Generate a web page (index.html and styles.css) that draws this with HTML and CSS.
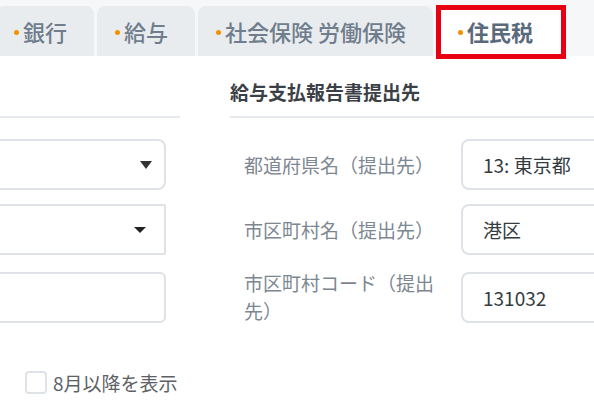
FILE: index.html
```html
<!DOCTYPE html>
<html lang="ja">
<head>
<meta charset="utf-8">
<title>住民税</title>
<link rel="stylesheet" href="styles.css">
</head>
<body>
<div class="page">
  <nav class="tabs">
    <div class="tab"><span class="dot"></span>銀行</div>
    <div class="tab"><span class="dot"></span>給与</div>
    <div class="tab"><span class="dot"></span>社会保険 労働保険</div>
    <div class="tab tab-active"><span class="dot"></span>住民税</div>
  </nav>
  <main class="content">
    <section class="col col-left">
      <div class="sec-head"></div>
      <div class="rows">
        <div class="row">
          <div class="field field-a">
            <svg class="arrow" width="12" height="8" viewBox="0 0 12 8"><polygon points="0,0 12,0 6,8" fill="#333"/></svg>
          </div>
        </div>
        <div class="row">
          <div class="field field-b">
            <svg class="arrow" width="12" height="6" viewBox="0 0 12 6"><polygon points="0,0 12,0 6,6" fill="#222"/></svg>
          </div>
        </div>
        <div class="row row-tall">
          <div class="field field-c"></div>
        </div>
      </div>
    </section>
    <section class="col col-right">
      <div class="sec-head">給与支払報告書提出先</div>
      <div class="rows">
        <div class="row">
          <div class="label">都道府県名（提出先）</div>
          <div class="field field-r">13: 東京都</div>
        </div>
        <div class="row">
          <div class="label">市区町村名（提出先）</div>
          <div class="field field-r">港区</div>
        </div>
        <div class="row row-tall">
          <div class="label">市区町村コード（提出先）</div>
          <div class="field field-r">131032</div>
        </div>
      </div>
    </section>
  </main>
  <div class="check-row">
    <span class="checkbox"></span>
    <span class="check-label">8月以降を表示</span>
  </div>
</div>
</body>
</html>
```
FILE: styles.css
```css
* { box-sizing: border-box; }

body {
  margin: 0;
  width: 594px;
  height: 407px;
  overflow: hidden;
  background: #ffffff;
  font-family: "Noto Sans CJK JP", "Noto Sans", sans-serif;
}

.page {
  width: 594px;
  overflow: hidden;
}

.tabs {
  display: flex;
  gap: 3px;
  height: 56px;
  padding-top: 6px;
  margin-left: -4px;
  background: #f6f7f9;
}

.tab {
  display: flex;
  align-items: center;
  flex: 0 0 auto;
  padding: 0 27px 0 18px;
  background: #e9ecef;
  border-radius: 8px 8px 0 0;
  font-size: 22px;
  font-weight: 500;
  color: #6f7d8c;
  white-space: nowrap;
}

.dot {
  width: 5px;
  height: 5px;
  border-radius: 50%;
  background: #f39200;
  margin-right: 4px;
  margin-top: 3px;
}

.tab-active {
  position: relative;
  background: #ffffff;
  font-weight: 700;
  color: #5a6a7c;
  padding: 0 33px 0 22px;
}

.tab-active::after {
  content: "";
  position: absolute;
  top: -1px;
  bottom: -3px;
  left: 0;
  right: 0;
  border: 5px solid #e60012;
}

.content {
  display: flex;
}

.col-left {
  flex: 0 0 200px;
  margin-left: -20px;
}

.col-right {
  flex: 0 0 450px;
  margin-left: 50px;
}

.sec-head {
  height: 62px;
  padding-top: 22px;
  line-height: 28px;
  font-size: 19px;
  font-weight: 700;
  color: #3b4046;
  border-bottom: 2px solid #e6e9ed;
}

.rows {
  display: flex;
  flex-direction: column;
  gap: 14px;
  margin-top: 21px;
}

.row {
  display: flex;
  align-items: center;
  height: 51px;
}

.row-tall {
  height: 56px;
}

.col-right .row {
  padding-left: 14px;
}

.label {
  flex: 0 0 217px;
  padding-right: 20px;
  font-size: 19px;
  line-height: 28px;
  color: #7d8792;
}

.field {
  display: flex;
  align-items: center;
  height: 51px;
  border: 2px solid #dee2e6;
  background: #ffffff;
}

.field-a,
.field-b,
.field-c {
  width: 186px;
  justify-content: flex-end;
}

.field-a {
  border-radius: 8px;
  padding-right: 12px;
}

.field-b {
  border-radius: 2px;
  padding-right: 18px;
}

.field-c {
  border-radius: 6px;
}

.field-r {
  width: 220px;
  border-radius: 8px;
  padding-left: 20px;
  font-size: 19px;
  color: #333a40;
}

.arrow {
  display: block;
}

.check-row {
  display: flex;
  align-items: center;
  gap: 6px;
  margin-top: 44px;
  padding-left: 25px;
}

.checkbox {
  width: 22px;
  height: 23px;
  border: 2px solid #dfe3e8;
  border-radius: 4px;
  background: #ffffff;
}

.check-label {
  font-size: 19px;
  color: #5c6166;
}
```
